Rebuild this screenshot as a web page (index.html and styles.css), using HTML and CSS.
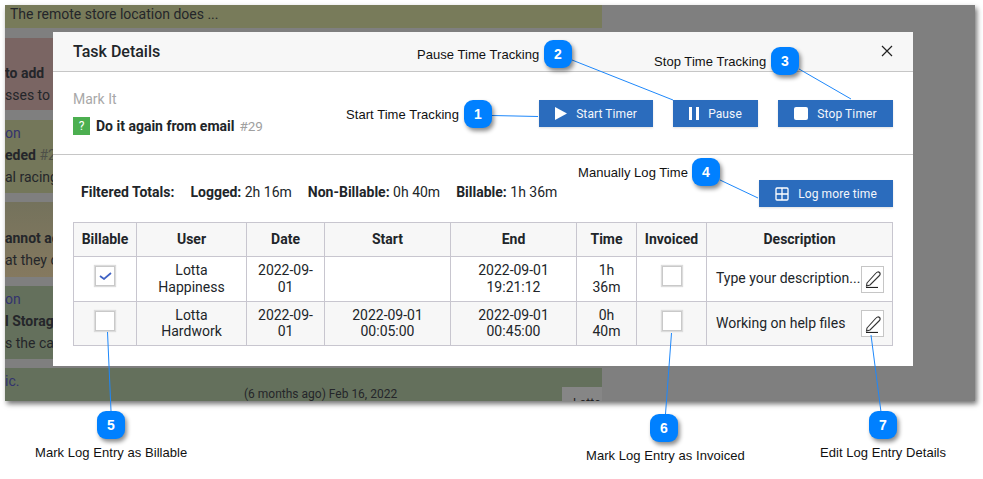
FILE: index.html
```html
<!DOCTYPE html>
<html lang="en">
<head>
<meta charset="utf-8">
<title>Task Details</title>
<link rel="stylesheet" href="styles.css">
</head>
<body>
<div class="stage">
  <div class="window">
    <div class="feed">
      <div class="card card-a"><div class="ln ln-first">The remote store location does ...</div></div>
      <div class="card card-b"><div class="ln"><b>to add</b></div><div class="ln">sses to</div></div>
      <div class="card card-c"><div class="ln link">on</div><div class="ln"><b>eded</b> <span class="dim">#2</span></div><div class="ln">al racing</div></div>
      <div class="card card-d"><div class="ln"><b>annot ac</b></div><div class="ln">at they c</div></div>
      <div class="card card-e"><div class="ln link">on</div><div class="ln"><b>l Storage</b></div><div class="ln">s the ca</div></div>
      <div class="card card-f">
        <div class="ln link">ic.</div>
        <div class="foot"><span class="ago">(6 months ago) Feb 16, 2022</span><span class="owner">Lotta</span></div>
      </div>
    </div>
  </div>

  <section class="modal">
    <header class="modal-head">
      <h1 class="modal-title">Task Details</h1>
      <svg class="close" viewBox="0 0 12 12" width="12" height="12"><path d="M1 1l10 10M11 1L1 11"/></svg>
    </header>
    <div class="task-row">
      <div class="task-info">
        <div class="task-project">Mark It</div>
        <div class="task-name"><span class="badge">?</span><b>Do it again from email</b><span class="task-no">#29</span></div>
      </div>
      <div class="actions">
        <a class="btn btn-start"><svg viewBox="0 0 12 13" width="12" height="13"><path d="M0 0l12 6.5L0 13z"/></svg>Start Timer</a>
        <a class="btn btn-pause"><svg viewBox="0 0 10 13" width="10" height="13"><path d="M0 0h3v13H0zM7 0h3v13H7z"/></svg>Pause</a>
        <a class="btn btn-stop"><svg viewBox="0 0 14 13" width="14" height="13"><rect width="14" height="13" rx="2"/></svg>Stop Timer</a>
      </div>
    </div>
    <div class="log-area">
      <div class="totals-row">
        <div class="totals">
          <b class="totals-label">Filtered Totals:</b>
          <span><b>Logged:</b> 2h 16m</span>
          <span><b>Non-Billable:</b> 0h 40m</span>
          <span><b>Billable:</b> 1h 36m</span>
        </div>
        <a class="btn btn-log"><svg class="plus-box" viewBox="0 0 14 14" width="14" height="14"><rect x="1" y="1" width="12" height="12" rx="1"/><path d="M7 1v12M1 7h12"/></svg>Log more time</a>
      </div>
      <table class="log-table">
        <colgroup>
          <col class="c-bill"><col class="c-user"><col class="c-date"><col class="c-start"><col class="c-end"><col class="c-time"><col class="c-inv"><col class="c-desc">
        </colgroup>
        <thead>
          <tr><th>Billable</th><th>User</th><th>Date</th><th>Start</th><th>End</th><th>Time</th><th>Invoiced</th><th>Description</th></tr>
        </thead>
        <tbody>
          <tr>
            <td><span class="check"><svg viewBox="0 0 13 8" width="13" height="8"><path d="M1 4l4 3L12 1"/></svg></span></td>
            <td>Lotta<br>Happiness</td>
            <td>2022-09-<br>01</td>
            <td></td>
            <td>2022-09-01<br>19:21:12</td>
            <td>1h<br>36m</td>
            <td><span class="check"></span></td>
            <td class="desc"><div class="desc-wrap"><span class="desc-text">Type your description...</span><span class="edit"><svg viewBox="0 0 16 18" width="16" height="18"><path class="pen" d="M2 13L11 3C12 1.800 13.500 1.500 14.500 2.500C15.500 3.500 15 5 14 6L5 15L1.500 16z"/><path class="pen-dark" d="M1 17.500H13"/></svg></span></div></td>
          </tr>
          <tr class="alt">
            <td><span class="check"></span></td>
            <td>Lotta<br>Hardwork</td>
            <td>2022-09-<br>01</td>
            <td>2022-09-01<br>00:05:00</td>
            <td>2022-09-01<br>00:45:00</td>
            <td>0h<br>40m</td>
            <td><span class="check"></span></td>
            <td class="desc"><div class="desc-wrap"><span class="desc-text">Working on help files</span><span class="edit"><svg viewBox="0 0 16 18" width="16" height="18"><path class="pen" d="M2 13L11 3C12 1.800 13.500 1.500 14.500 2.500C15.500 3.500 15 5 14 6L5 15L1.500 16z"/><path class="pen-dark" d="M1 17.500H13"/></svg></span></div></td>
          </tr>
        </tbody>
      </table>
    </div>
  </section>

  <svg class="leaders" viewBox="0 0 983 479" width="983" height="479">
    <path d="M492 115.500L538 116.500"/>
    <path d="M572 60L673 100"/>
    <path d="M799 69L851 99"/>
    <path d="M720 180L758 198"/>
    <path d="M107.500 332L111 411"/>
    <path d="M671.500 333L665.500 414"/>
    <path d="M871 335L881 412"/>
  </svg>

  <span class="note note-1">Start Time Tracking</span><span class="pin pin-1">1</span>
  <span class="note note-2">Pause Time Tracking</span><span class="pin pin-2">2</span>
  <span class="note note-3">Stop Time Tracking</span><span class="pin pin-3">3</span>
  <span class="note note-4">Manually Log Time</span><span class="pin pin-4">4</span>
  <span class="note note-5">Mark Log Entry as Billable</span><span class="pin pin-5">5</span>
  <span class="note note-6">Mark Log Entry as Invoiced</span><span class="pin pin-6">6</span>
  <span class="note note-7">Edit Log Entry Details</span><span class="pin pin-7">7</span>
</div>
</body>
</html>
```

FILE: styles.css
```css
* { box-sizing: border-box; }
html, body { margin: 0; padding: 0; background: #fff; }
body { font-family: Roboto, "Liberation Sans", sans-serif; font-size: 14px; color: #212529; }
.stage { position: relative; width: 983px; height: 479px; overflow: hidden; }

/* dimmed page behind the dialog */
.window {
  position: absolute; left: 5px; top: 5px; width: 970px; height: 396px;
  background: #7f7f7f; overflow: hidden;
  box-shadow: 2px 3px 5px rgba(0, 0, 0, .55);
}
.feed { width: 597px; display: flex; flex-direction: column; color: #24262a; }
.card { font-size: 14px; line-height: 22px; white-space: nowrap; }
.ln-first { padding-left: 5px; line-height: 18px; }
.card-a { height: 23px; margin-bottom: 10px; background: #787b5a; }
.card-b { height: 72px; margin-bottom: 10px; padding-top: 24px; background: #7a6563; }
.card-c { height: 73px; margin-bottom: 9px; padding-top: 2px; background: #74775a; }
.card-d { height: 75px; margin-bottom: 9px; padding-top: 25px; background: linear-gradient(#74725c, #85795f); }
.card-e { height: 73px; margin-bottom: 9px; padding-top: 2px; background: #64705c; }
.card-f { height: 33px; padding-top: 2px; background: #64705c; }
.link { color: #33336e; }
.dim { color: #4e5048; }
.foot { display: flex; justify-content: space-between; align-items: flex-start; font-size: 12px; line-height: 14px; margin-top: -5px; padding-left: 239px; }
.owner { width: 40px; height: 14px; padding: 9px 0 0 11px; background: #868686; color: #222; overflow: hidden; }

/* dialog */
.modal { position: absolute; left: 53px; top: 32px; width: 860px; height: 334px; background: #fff; }
.modal-head {
  display: flex; justify-content: space-between; align-items: center;
  height: 40px; padding: 0 20px; background: #f7f7f7; border-bottom: 1px solid #c6c6c6;
}
.modal-title { margin: 0; font-size: 16px; font-weight: 500; line-height: 20px; color: #212529; }
.close { margin-top: -2px; }
.close path { fill: none; stroke: #222; stroke-width: 1.2; }

.task-row { display: flex; justify-content: space-between; height: 83px; padding: 0 20px; border-bottom: 1px solid #c6c6c6; }
.task-info { padding-top: 19px; }
.task-project { color: #a8a8a8; line-height: 17px; }
.task-name { display: flex; align-items: center; margin-top: 9px; line-height: 18px; }
.task-name b { font-weight: 700; }
.badge { width: 17px; height: 18px; margin-right: 6px; background: #4caf50; color: #fff; font-size: 12px; text-align: center; }
.task-no { margin-left: 5px; font-size: 13.5px; color: #a0a0a0; }
.actions { display: flex; gap: 20px; padding-top: 28px; align-items: flex-start; }

.btn {
  display: flex; align-items: center; justify-content: center; gap: 9px;
  height: 27px; background: #2b6cbd; color: #f4f6fb; font-size: 12px; font-weight: 400; letter-spacing: .1px;
  box-shadow: 0 1px 2px rgba(0, 0, 0, .12);
}
.btn svg { fill: #fff; flex: none; }
.btn-start { width: 114px; }
.btn-pause { width: 85px; }
.btn-stop { width: 115px; }
.btn-log { width: 134px; }
.btn .plus-box { fill: none; stroke: #fff; stroke-width: 1.300; }

.log-area { padding: 0 20px; }
.totals-row { display: flex; justify-content: space-between; align-items: center; padding: 25px 0 15px; }
.totals { display: flex; gap: 16px; padding-left: 8px; margin-top: -3px; line-height: 20px; }
.totals b { font-weight: 700; }

.log-table { width: 819px; table-layout: fixed; border-collapse: collapse; font-size: 14px; line-height: 17px; color: #212529; }
.log-table th, .log-table td { border: 1px solid #c8c6cf; padding: 0; text-align: center; vertical-align: middle; }
.log-table th { height: 34px; font-weight: 700; background: #f7f7f7; }
.log-table td { height: 45px; background: #fff; }
.log-table .alt td { height: 44px; line-height: 16px; background: #f7f7f7; }
.log-table .alt td:not(.desc) { padding-bottom: 2px; }
.c-bill { width: 63px; }
.c-user { width: 110px; }
.c-date { width: 78px; }
.c-start { width: 126px; }
.c-end { width: 126px; }
.c-time { width: 60px; }
.c-inv { width: 70px; }
.c-desc { width: 186px; }

.check {
  display: inline-flex; align-items: center; justify-content: center; vertical-align: middle;
  width: 20px; height: 20px; margin-bottom: 6px; background: #fff; border: 1px solid #c9c9c9;
  box-shadow: 0 0 1px 1px #dcdcdc;
}
.alt .check { margin-bottom: 4px; }
.check svg { fill: none; stroke: #3f62c4; stroke-width: 1.700; }

.log-table .desc { text-align: left; padding: 0 8px 0 9px; }
.desc-wrap { display: flex; justify-content: space-between; align-items: center; }
.desc-text { line-height: 17px; margin-top: -2px; white-space: nowrap; }
.alt .desc-text { margin-top: 0; }
.edit {
  display: flex; align-items: center; justify-content: center;
  width: 23px; height: 27px; background: #fff; border: 1px solid #c6c6c6;
}
.pen { fill: none; stroke: #333; stroke-width: 1.100; }
.pen-dark { fill: none; stroke: #222; stroke-width: 1.200; }

/* annotations */
.leaders { position: absolute; left: 0; top: 0; pointer-events: none; }
.leaders path { fill: none; stroke: #1e88fb; stroke-width: 1; }
.note { position: absolute; font-family: "Liberation Sans", Arial, sans-serif; font-size: 13px; line-height: 14px; color: #111; white-space: nowrap; letter-spacing: .05px; }
.pin {
  position: absolute; width: 28px; height: 28px; border-radius: 9px;
  display: flex; align-items: center; justify-content: center;
  background: #0080ff; color: #fff; font-family: "Liberation Sans", Arial, sans-serif; font-size: 14px; font-weight: 700;
  box-shadow: 2px 3px 4px rgba(0, 0, 0, .45);
}
.pin-1 { left: 464px; top: 100px; }
.pin-2 { left: 544px; top: 40px; }
.pin-3 { left: 771px; top: 47px; }
.pin-4 { left: 692px; top: 158px; }
.pin-5 { left: 97px; top: 411px; }
.pin-6 { left: 650px; top: 414px; }
.pin-7 { left: 869px; top: 411px; }
.note-1 { left: 346px; top: 108px; }
.note-2 { left: 417px; top: 48px; }
.note-3 { left: 654px; top: 55px; }
.note-4 { left: 578px; top: 166px; }
.note-5 { left: 35px; top: 446px; }
.note-6 { left: 586px; top: 449px; }
.note-7 { left: 820px; top: 446px; }
```
